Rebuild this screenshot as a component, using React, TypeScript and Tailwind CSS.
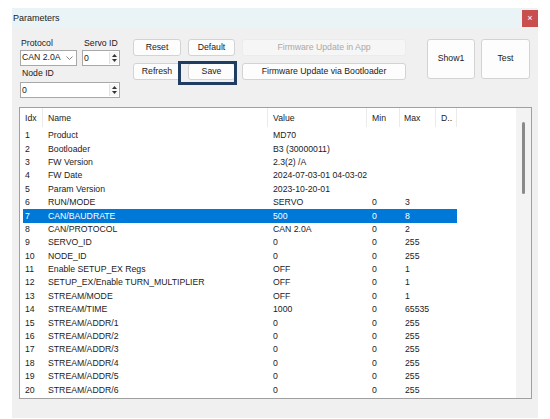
type Row = { idx: number; name: string; value: string; min?: string; max?: string };

const rows: Row[] = [
  { idx: 1, name: 'Product', value: 'MD70' },
  { idx: 2, name: 'Bootloader', value: 'B3 (30000011)' },
  { idx: 3, name: 'FW Version', value: '2.3(2) /A' },
  { idx: 4, name: 'FW Date', value: '2024-07-03-01 04-03-02' },
  { idx: 5, name: 'Param Version', value: '2023-10-20-01' },
  { idx: 6, name: 'RUN/MODE', value: 'SERVO', min: '0', max: '3' },
  { idx: 7, name: 'CAN/BAUDRATE', value: '500', min: '0', max: '8' },
  { idx: 8, name: 'CAN/PROTOCOL', value: 'CAN 2.0A', min: '0', max: '2' },
  { idx: 9, name: 'SERVO_ID', value: '0', min: '0', max: '255' },
  { idx: 10, name: 'NODE_ID', value: '0', min: '0', max: '255' },
  { idx: 11, name: 'Enable SETUP_EX Regs', value: 'OFF', min: '0', max: '1' },
  { idx: 12, name: 'SETUP_EX/Enable TURN_MULTIPLIER', value: 'OFF', min: '0', max: '1' },
  { idx: 13, name: 'STREAM/MODE', value: 'OFF', min: '0', max: '1' },
  { idx: 14, name: 'STREAM/TIME', value: '1000', min: '0', max: '65535' },
  { idx: 15, name: 'STREAM/ADDR/1', value: '0', min: '0', max: '255' },
  { idx: 16, name: 'STREAM/ADDR/2', value: '0', min: '0', max: '255' },
  { idx: 17, name: 'STREAM/ADDR/3', value: '0', min: '0', max: '255' },
  { idx: 18, name: 'STREAM/ADDR/4', value: '0', min: '0', max: '255' },
  { idx: 19, name: 'STREAM/ADDR/5', value: '0', min: '0', max: '255' },
  { idx: 20, name: 'STREAM/ADDR/6', value: '0', min: '0', max: '255' },
  { idx: 21, name: 'STREAM/ADDR/7', value: '0', min: '0', max: '255' },
];

const SELECTED = 7;

function SpinArrows() {
  return (
    <div className="flex h-full w-[9px] flex-col items-center justify-center gap-[2px] border-l border-[#e3e3e3] bg-[#f7f7f7]">
      <svg width="5" height="3" viewBox="0 0 5 3">
        <polygon points="2.5,0 5,3 0,3" fill="#333" />
      </svg>
      <svg width="5" height="3" viewBox="0 0 5 3">
        <polygon points="0,0 5,0 2.5,3" fill="#333" />
      </svg>
    </div>
  );
}

function Spinner({ width }: { width: string }) {
  return (
    <div className={`flex h-[16px] items-stretch border border-[#a8a8a8] bg-white ${width}`}>
      <span className="flex-1 pl-[1px] leading-[14px]">0</span>
      <div className="py-[1px] pr-[1px]">
        <SpinArrows />
      </div>
    </div>
  );
}

function WinButton({
  children,
  className = '',
  disabled = false,
}: {
  children: React.ReactNode;
  className?: string;
  disabled?: boolean;
}) {
  return (
    <button
      type="button"
      className={`flex items-center justify-center whitespace-nowrap rounded-[3px] border ${
        disabled ? 'border-[#ececec] bg-[#f6f6f6] text-[#a9a9a9]' : 'border-[#d3d3d3] bg-[#fdfdfd] text-[#1b1b1b]'
      } ${className}`}
    >
      {children}
    </button>
  );
}

export default function App(): JSX.Element {
  return (
    <div className="h-[419px] w-[550px] overflow-hidden bg-white pl-[12px] pt-[8px] font-[Liberation_Sans,Arial,sans-serif] text-[8.7px] text-[#1b1b1b]">
      <div className="flex h-[410px] w-[526px] flex-col bg-[#f0f0f0]">
        {/* title bar */}
        <div className="flex h-[20px] items-start justify-between bg-[#eaf4f7]">
          <span className="pl-[1px] pt-[5px] text-[9px] leading-[11px]">Parameters</span>
          <div className="mt-[2px] flex h-[17px] w-[16px] items-center justify-center bg-[#c94f4f] text-[9px] leading-none text-white">
            ×
          </div>
        </div>

        {/* controls */}
        <div className="flex pl-[8px] pt-[9px]">
          <div className="flex w-[100px] flex-col">
            <div className="flex h-[13px] items-center">
              <span className="w-[64px] pl-[1px]">Protocol</span>
              <span>Servo ID</span>
            </div>
            <div className="flex h-[16px] gap-[5px]">
              <div className="flex h-[16px] w-[57px] items-center justify-between border border-[#a8a8a8] bg-white pl-[1px] pr-[3px]">
                <span className="whitespace-nowrap">CAN 2.0A</span>
                <svg width="7" height="4" viewBox="0 0 7 4" className="shrink-0">
                  <polyline points="0.5,0.5 3.5,3.5 6.5,0.5" fill="none" stroke="#666" strokeWidth="0.8" />
                </svg>
              </div>
              <Spinner width="w-[38px]" />
            </div>
            <div className="flex h-[16px] items-center pl-[2px]">Node ID</div>
            <Spinner width="w-[100px]" />
          </div>

          <div className="ml-[13px] mt-[2px] flex flex-col gap-[7px]">
            <div className="flex gap-[7px]">
              <WinButton className="h-[17px] w-[48px]">Reset</WinButton>
              <WinButton className="h-[17px] w-[47px]">Default</WinButton>
              <WinButton className="h-[17px] w-[164px]" disabled>
                Firmware Update in App
              </WinButton>
            </div>
            <div className="flex gap-[7px]">
              <WinButton className="h-[17px] w-[48px]">Refresh</WinButton>
              <div className="relative">
                <WinButton className="h-[17px] w-[47px]">Save</WinButton>
                <div className="pointer-events-none absolute left-[-10px] top-[-2px] h-[24px] w-[59px] border-[3px] border-[#1f3d63]" />
              </div>
              <WinButton className="h-[17px] w-[164px]">Firmware Update via Bootloader</WinButton>
            </div>
          </div>

          <div className="ml-[21px] mt-[2px] flex gap-[6px]">
            <WinButton className="h-[40px] w-[48px]">Show1</WinButton>
            <WinButton className="h-[40px] w-[49px]">Test</WinButton>
          </div>
        </div>

        {/* parameter list */}
        <div className="ml-[7px] mt-[9px] flex h-[292px] w-[513px] border border-[#a0a0a0] bg-white">
          <div className="flex flex-1 flex-col overflow-hidden">
            <div className="flex h-[20px] shrink-0 items-start pl-[3px]">
              <div className="h-[19px] w-[20px] border-r border-[#ebebeb] pl-[2px] leading-[20px]">Idx</div>
              <div className="h-[19px] w-[225px] border-r border-[#ebebeb] pl-[5px] leading-[20px]">Name</div>
              <div className="h-[19px] w-[99px] border-r border-[#ebebeb] pl-[5px] leading-[20px]">Value</div>
              <div className="h-[19px] w-[33px] border-r border-[#ebebeb] pl-[5px] leading-[20px]">Min</div>
              <div className="h-[19px] w-[36px] border-r border-[#ebebeb] pl-[4px] leading-[20px]">Max</div>
              <div className="h-[19px] w-[21px] border-r border-[#ebebeb] pl-[5px] leading-[20px]">D..</div>
            </div>
            <div className="flex flex-col pl-[3px] pt-[1px]">
              {rows.map((r) => {
                const sel = r.idx === SELECTED;
                return (
                  <div
                    key={r.idx}
                    className={`flex h-[13.4px] w-[434px] shrink-0 items-center whitespace-nowrap leading-[13px] ${
                      sel ? 'bg-[#0078d7] text-white' : ''
                    }`}
                  >
                    <div className="w-[20px] pl-[2px]">{r.idx}</div>
                    <div className="w-[225px] pl-[5px]">{r.name}</div>
                    <div className="w-[99px] pl-[5px]">{r.value}</div>
                    <div className="w-[33px] pl-[5px]">{r.min ?? ''}</div>
                    <div className="w-[36px] pl-[5px]">{r.max ?? ''}</div>
                    <div className="w-[21px]" />
                  </div>
                );
              })}
            </div>
          </div>
          <div className="flex w-[15px] shrink-0 justify-center bg-[#f3f3f3] pt-[14px]">
            <div className="h-[72px] w-[3px] rounded-full bg-[#8a8a8a]" />
          </div>
        </div>
      </div>
    </div>
  );
}
